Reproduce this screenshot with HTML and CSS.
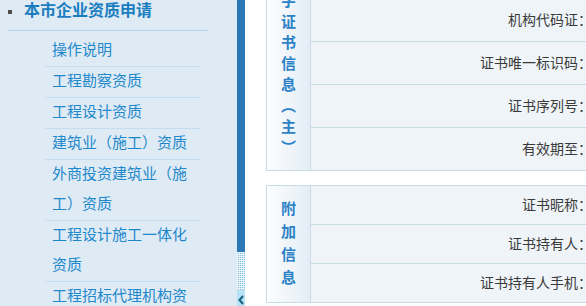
FILE: index.html
```html
<!DOCTYPE html>
<html lang="zh-CN">
<head>
    <meta charset="UTF-8">
    <meta name="viewport" content="width=device-width, initial-scale=1.0">
    <title>本市企业资质申请</title>
    <link rel="stylesheet" href="styles.css">
</head>
<body>

    <div class="page">
        <div class="sidebar">
            <div class="menu-title"><span class="bullet"></span>本市企业资质申请</div>
            <ul class="submenu">
                <li>操作说明</li>
                <li>工程勘察资质</li>
                <li>工程设计资质</li>
                <li>建筑业（施工）资质</li>
                <li>外商投资建筑业（施工）资质</li>
                <li>工程设计施工一体化资质</li>
                <li>工程招标代理机构资质</li>
            </ul>
        </div>

        <div class="splitter">
            <div class="splitter-bar"></div>
            <div class="splitter-grip"></div>
            <div class="splitter-toggle">
                <svg width="8" height="16" viewBox="0 0 8 16">
                    <polyline points="6,6 2.5,10 6,14" fill="none" stroke="#17617f" stroke-width="2"/>
                </svg>
            </div>
        </div>

        <div class="main">
            <div class="content">
                <table class="info-table cert-main">
                    <tr>
                        <th rowspan="5" class="group"><span>数字证书信息（主）</span></th>
                        <td class="field">证书主题：</td>
                        <td class="value"></td>
                    </tr>
                    <tr>
                        <td class="field">机构代码证：</td>
                        <td class="value"></td>
                    </tr>
                    <tr>
                        <td class="field">证书唯一标识码：</td>
                        <td class="value"></td>
                    </tr>
                    <tr>
                        <td class="field">证书序列号：</td>
                        <td class="value"></td>
                    </tr>
                    <tr>
                        <td class="field">有效期至：</td>
                        <td class="value"></td>
                    </tr>
                </table>

                <table class="info-table cert-extra">
                    <tr>
                        <th rowspan="3" class="group"><span>附加信息</span></th>
                        <td class="field">证书昵称：</td>
                        <td class="value"></td>
                    </tr>
                    <tr>
                        <td class="field">证书持有人：</td>
                        <td class="value"></td>
                    </tr>
                    <tr>
                        <td class="field">证书持有人手机：</td>
                        <td class="value"></td>
                    </tr>
                </table>
            </div>
        </div>
    </div>

</body>
</html>
```

FILE: styles.css
```css
html, body {
    margin: 0;
    padding: 0;
    height: 100%;
    overflow: hidden;
}

body {
    font-family: "Noto Sans CJK SC", "Noto Sans", sans-serif;
    background: #fff;
}

.page {
    display: flex;
    height: 100vh;
}

/* 左侧菜单 */
.sidebar {
    width: 237px;
    flex: none;
    box-sizing: border-box;
    padding-left: 8px;
    background: #deebf5;
}

.menu-title {
    display: flex;
    width: 200px;
    padding-bottom: 12px;
    border-bottom: 1px solid #b8cfe9;
    font-size: 16px;
    font-weight: bold;
    line-height: 18px;
    color: #1a7dc0;
}

.bullet {
    width: 4px;
    height: 4px;
    margin: 10px 12px 0 0;
    background: #4d4d4d;
}

.submenu {
    list-style: none;
    margin: 0;
    padding: 5px 0 0 37px;
}

.submenu li {
    width: 148px;
    margin-top: -2px;
    padding: 0 0 2px 7px;
    border-bottom: 1px solid #c5dcf0;
    font-size: 15px;
    line-height: 30px;
    color: #1f88cb;
}

/* 折叠条 */
.splitter {
    width: 8px;
    flex: none;
    display: flex;
    flex-direction: column;
}

.splitter-bar {
    flex: 1;
    background: #2b78b4;
}

.splitter-grip {
    height: 38px;
    background-color: #7fbfe0;
    background-image:
        linear-gradient(90deg, rgba(255, 255, 255, 0.75) 1px, transparent 1px),
        linear-gradient(rgba(255, 255, 255, 0.75) 1px, transparent 1px);
    background-size: 2px 2px;
}

.splitter-toggle {
    height: 16px;
    background: #b6e2f3;
}

.splitter-toggle svg {
    display: block;
}

/* 右侧内容 */
.main {
    flex: 1;
    min-width: 0;
    padding-left: 21px;
    overflow: hidden;
}

.content {
    margin-top: -45px;
    width: 700px;
}

.info-table {
    width: 700px;
    border: 1px solid #c8dce6;
    border-spacing: 0;
    table-layout: fixed;
    background: #eff4f8;
}

.cert-extra {
    margin-top: 14px;
}

.info-table .group {
    width: 43px;
    padding: 0;
    border-right: 1px solid #c8dce6;
    background: linear-gradient(to right, #fcfdfe, #e4edf6);
    font-size: 0;
    line-height: 0;
    text-align: center;
    vertical-align: middle;
}

.group span {
    display: inline-block;
    vertical-align: top;
    writing-mode: vertical-rl;
    font-size: 15px;
    font-weight: bold;
    line-height: 15px;
    color: #2c82c6;
}

.cert-main .group span {
    letter-spacing: 6px;
    padding-top: 6px;
}

.cert-extra .group span {
    letter-spacing: 8px;
    padding-top: 6px;
}

.info-table td {
    padding: 0;
    border-bottom: 1px solid #c8dce6;
}

.info-table tr:last-child td {
    border-bottom: none;
}

.cert-main tr {
    height: 43px;
}

.cert-main tr:last-child {
    height: 42px;
}

.cert-extra tr {
    height: 39px;
}

.cert-extra tr:last-child {
    height: 38px;
}

.info-table .field {
    width: 281px;
    padding: 0 4px 3px 0;
    text-align: right;
    font-size: 14px;
    color: #3a3a3a;
}
```
